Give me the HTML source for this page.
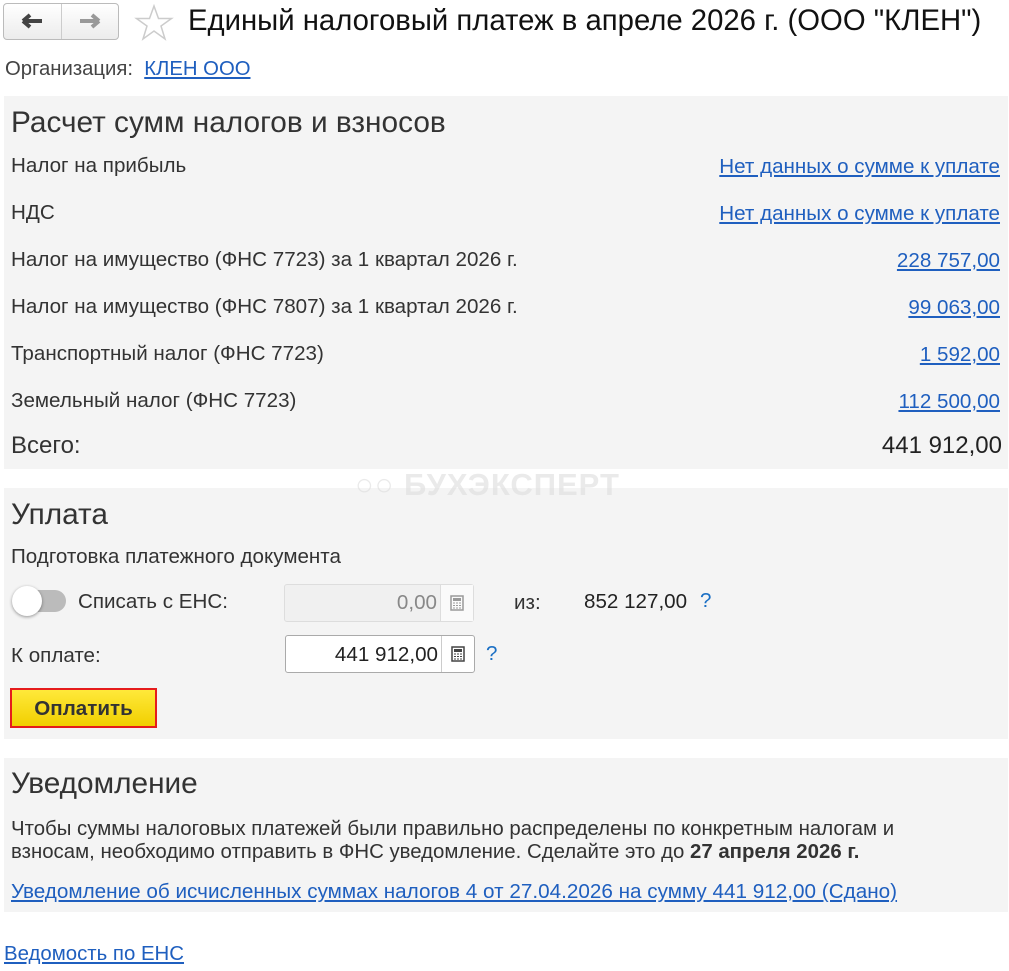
<!DOCTYPE html>
<html><head><meta charset="utf-8"><style>
*{margin:0;padding:0;box-sizing:border-box}
body{width:1009px;height:971px;background:#fff;font-family:"Liberation Sans","Noto Sans CJK SC",sans-serif;color:#333;font-size:20.6px;position:relative;overflow:hidden}
.a{position:absolute;white-space:nowrap;line-height:24px}
.r{right:9px;text-align:right}
a,.l{color:#1f5fbf;text-decoration:underline}
.sec{position:absolute;left:4px;width:1004px;background:#f4f4f4}
.h{font-size:29.8px;line-height:32px}
.inp{position:absolute;height:38px;border:1px solid #aaa;border-radius:3px;background:#fff}
.calc{position:absolute;right:0;top:0;width:33px;height:36px;border-left:1px solid #ccc}
.calc svg{position:absolute;left:9px;top:10px}
</style></head><body>
<div style="position:absolute;left:3px;top:3px;width:116px;height:37px;border:1px solid #bbb;border-radius:4px;background:linear-gradient(#fff,#ececec)"></div>
<div style="position:absolute;left:61px;top:4px;width:1px;height:35px;background:#ccc"></div>
<svg style="position:absolute;left:20px;top:12px" width="26" height="18"><path d="M3 9H22M3 9L10 3M3 9L10 15" stroke="#444" stroke-width="4" fill="none"/></svg>
<svg style="position:absolute;left:76px;top:12px" width="26" height="18"><path d="M23 9H4M23 9L16 3M23 9L16 15" stroke="#999" stroke-width="4" fill="none"/></svg>
<svg style="position:absolute;left:134px;top:4px" width="40" height="38"><path d="M20 2L24.5 14.5H37.5L27 22L31 35L20 27L9 35L13 22L2.5 14.5H15.5Z" fill="none" stroke="#ccc" stroke-width="1.5"/></svg>
<div class="a" style="left:188px;top:4px;font-size:29.3px;line-height:34px;color:#111">Единый налоговый платеж в апреле 2026 г. (ООО "КЛЕН")</div>
<div class="a" style="left:5px;top:57px;font-size:20.3px;color:#444">Организация:&nbsp; <a>КЛЕН ООО</a></div>

<div class="sec" style="top:96px;height:373px"></div>
<div class="a h" style="left:11px;top:107px">Расчет сумм налогов и взносов</div>
<div class="a" style="left:11px;top:154px">Налог на прибыль</div><div class="a r l" style="top:155px">Нет данных о сумме к уплате</div>
<div class="a" style="left:11px;top:201px">НДС</div><div class="a r l" style="top:202px">Нет данных о сумме к уплате</div>
<div class="a" style="left:11px;top:248px">Налог на имущество (ФНС 7723) за 1 квартал 2026 г.</div><div class="a r l" style="top:249px">228 757,00</div>
<div class="a" style="left:11px;top:295px">Налог на имущество (ФНС 7807) за 1 квартал 2026 г.</div><div class="a r l" style="top:296px">99 063,00</div>
<div class="a" style="left:11px;top:342px">Транспортный налог (ФНС 7723)</div><div class="a r l" style="top:343px">1 592,00</div>
<div class="a" style="left:11px;top:389px">Земельный налог (ФНС 7723)</div><div class="a r l" style="top:390px">112 500,00</div>
<div class="a" style="left:11px;top:433px;font-size:24px;line-height:26px">Всего:</div><div class="a r" style="top:433px;font-size:24px;line-height:26px;color:#222;right:7px">441 912,00</div>

<div class="sec" style="top:488px;height:251px"></div>
<div class="a" style="left:355px;top:467px;font-size:31px;font-weight:bold;color:#ddd;opacity:.6;line-height:36px;letter-spacing:1px">&#9675;&#9675; БУХЭКСПЕРТ</div>
<div class="a h" style="left:11px;top:499px">Уплата</div>
<div class="a" style="left:11px;top:545px">Подготовка платежного документа</div>
<div style="position:absolute;left:14px;top:590px;width:52px;height:22px;border-radius:11px;background:#bbb"></div>
<div style="position:absolute;left:12px;top:586px;width:30px;height:30px;border-radius:50%;background:#fff;box-shadow:0 1px 3px rgba(0,0,0,.4)"></div>
<div class="a" style="left:78px;top:590px">Списать с ЕНС:</div>
<div class="inp" style="left:284px;top:584px;width:190px;background:#f0f0f0;border-color:#ddd"><div class="a" style="right:36px;top:6px;color:#888">0,00</div><div class="calc" style="border-color:#ddd;background:#fafafa"><svg width="14" height="16"><rect x="1" y="1" width="12" height="14" fill="none" stroke="#999" stroke-width="1.5"/><rect x="3" y="3" width="8" height="3" fill="#999"/><path d="M3 8h2M6 8h2M9 8h2M3 10.5h2M6 10.5h2M9 10.5h2M3 13h2M6 13h2M9 13h2" stroke="#999"/></svg></div></div>
<div class="a" style="left:514px;top:591px">из:</div>
<div class="a" style="left:584px;top:590px;color:#222">852 127,00</div>
<div class="a" style="left:700px;top:589px;color:#1a6fc4">?</div>
<div class="a" style="left:11px;top:644px">К оплате:</div>
<div class="inp" style="left:285px;top:635px;width:190px"><div class="a" style="right:36px;top:7px;color:#222">441 912,00</div><div class="calc"><svg width="14" height="16"><rect x="1" y="1" width="12" height="14" fill="none" stroke="#444" stroke-width="1.5"/><rect x="3" y="3" width="8" height="3" fill="#444"/><path d="M3 8h2M6 8h2M9 8h2M3 10.5h2M6 10.5h2M9 10.5h2M3 13h2M6 13h2M9 13h2" stroke="#444"/></svg></div></div>
<div class="a" style="left:486px;top:642px;color:#1a6fc4">?</div>
<div style="position:absolute;left:10px;top:688px;width:147px;height:40px;border:2px solid #e51c1c;background:linear-gradient(#ffe93a,#f1cf00)"></div>
<div class="a" style="left:10px;top:697px;width:147px;text-align:center;font-weight:bold;color:#333">Оплатить</div>

<div class="sec" style="top:758px;height:154px"></div>
<div class="a h" style="left:11px;top:768px">Уведомление</div>
<div class="a" style="left:11px;top:817px;font-size:20.4px">Чтобы суммы налоговых платежей были правильно распределены по конкретным налогам и</div>
<div class="a" style="left:11px;top:840px;font-size:20.4px">взносам, необходимо отправить в ФНС уведомление. Сделайте это до <b>27 апреля 2026 г.</b></div>
<div class="a l" style="left:11px;top:880px;font-size:20.7px">Уведомление об исчисленных суммах налогов 4 от 27.04.2026 на сумму 441 912,00 (Сдано)</div>
<div class="a l" style="left:4px;top:942px;font-size:20.4px">Ведомость по ЕНС</div>
</body></html>
